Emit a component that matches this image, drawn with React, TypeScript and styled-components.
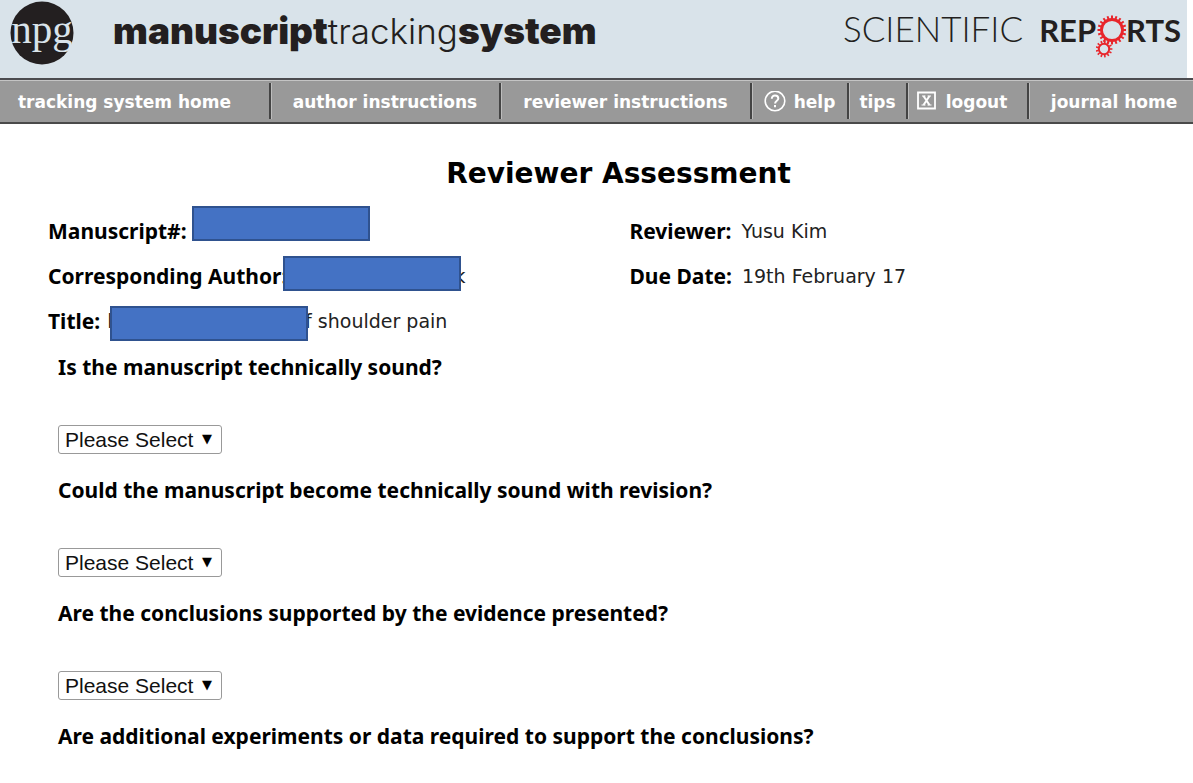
import React from "react";
import styled, { createGlobalStyle } from "styled-components";

const GlobalStyle = createGlobalStyle`
  * { box-sizing: border-box; }
  body {
    margin: 0;
    background: #fff;
    color: #000;
    font-family: "DejaVu Sans", Verdana, sans-serif;
    overflow-x: hidden;
  }
`;

const Header = styled.header`
  display: flex;
  align-items: flex-start;
  justify-content: space-between;
  height: 78px;
  margin-right: 6px;
  background: #d9e3ea;
`;

const Brand = styled.div`
  display: flex;
  align-items: flex-start;
  gap: 38px;
  padding-left: 10px;
`;

const NpgLogo = styled.svg`
  display: block;
  width: 65px;
  height: 65px;
`;

const SystemName = styled.div`
  padding-top: 8px;
  font: 300 35px/46px Inter, "Liberation Sans", sans-serif;
  color: #231f20;
  white-space: nowrap;

  strong {
    font-size: 37px;
    font-weight: 900;
  }
`;

const JournalLogo = styled.div`
  display: flex;
  align-items: baseline;
  padding: 8px 6px 0 0;
  font: 300 35px/40px Lato, sans-serif;
  color: #231f20;
  white-space: nowrap;
`;

const JournalStrong = styled.strong`
  display: flex;
  margin-left: 16px;
  font-size: 31px;
  font-weight: 700;
`;

const Gears = styled.svg`
  display: block;
  width: 30px;
  height: 44px;
  margin-top: 4px;
`;

const Nav = styled.nav`
  display: grid;
  grid-template-columns: 271fr 230fr 251fr 97fr 59fr 121fr 164fr;
  height: 46px;
  padding: 3px 0;
  background: #999;
  border-top: 2px solid #4c4c50;
  border-bottom: 2px solid #4a4a4a;
  box-shadow: inset 0 1px 0 #c4c4c4;
`;

const NavLink = styled.a<{ $before?: number; $after?: number; $last?: boolean }>`
  display: flex;
  align-items: center;
  justify-content: center;
  gap: 8px;
  padding: 2px ${(p) => p.$after ?? 0}px 0 ${(p) => p.$before ?? 0}px;
  border-right: ${(p) => (p.$last ? "none" : "2px solid #444")};
  box-shadow: ${(p) => (p.$last ? "none" : "1px 0 0 #bdbdbd")};
  color: #fff;
  font-size: 17px;
  font-weight: 700;
  text-decoration: none;
  white-space: nowrap;
`;

const NavIcon = styled.svg`
  display: block;
  width: 22px;
  height: 22px;
`;

const Main = styled.main`
  padding: 33px 48px 16px;
`;

const Title = styled.h1`
  margin: 0 0 28px;
  padding-left: 44px;
  font-size: 28px;
  line-height: 34px;
  text-align: center;
`;

const Details = styled.dl`
  display: grid;
  grid-template-columns: 53% 47%;
  row-gap: 21px;
  margin: 0 0 22px;
  font-size: 19px;
  line-height: 24px;
`;

const Detail = styled.div<{ $wide?: boolean; $gap?: number }>`
  position: relative;
  display: flex;
  gap: ${(p) => p.$gap ?? 7}px;
  grid-column: ${(p) => (p.$wide ? "1 / -1" : "auto")};
  white-space: nowrap;

  dt {
    font-family: "Noto Sans", sans-serif;
    font-size: 21px;
    font-weight: 700;
  }
  dd {
    margin: 0;
    color: #222;
  }
`;

const Trailing = styled.span<{ $indent: number }>`
  margin-left: ${(p) => p.$indent}px;
`;

const Cover = styled.span<{ $left: number; $top: number; $width: number }>`
  position: absolute;
  left: ${(p) => p.$left}px;
  top: ${(p) => p.$top}px;
  width: ${(p) => p.$width}px;
  height: 35px;
  background: #4472c4;
  border: 2px solid #2f528f;
`;

const Questions = styled.form`
  display: grid;
  gap: 24px;
  padding-left: 10px;
`;

const QuestionLabel = styled.label`
  display: block;
  font: 700 21px/24px "Noto Sans", sans-serif;
`;

const SelectBox = styled.div`
  position: relative;
  width: 164px;
  height: 29px;
  margin-top: 46px;
`;

const Select = styled.select`
  appearance: none;
  display: block;
  width: 100%;
  height: 100%;
  padding: 0 6px;
  background: #fff;
  border: 1px solid #999;
  border-radius: 3px;
  color: #111;
  font: 21px "Liberation Sans", Arial, sans-serif;
`;

const Arrow = styled.span`
  position: absolute;
  right: 10px;
  top: 6px;
  font-size: 13px;
  line-height: 16px;
  pointer-events: none;
`;

const questions = [
  { text: "Is the manuscript technically sound?", answerable: true },
  { text: "Could the manuscript become technically sound with revision?", answerable: true },
  { text: "Are the conclusions supported by the evidence presented?", answerable: true },
  { text: "Are additional experiments or data required to support the conclusions?", answerable: false },
];

function teeth(cx: number, cy: number, inner: number, outer: number, count: number) {
  return Array.from({ length: count }, (_, i) => {
    const a = (i * 2 * Math.PI) / count;
    const c = Math.cos(a);
    const s = Math.sin(a);
    return `M${cx + inner * c} ${cy + inner * s}L${cx + outer * c} ${cy + outer * s}`;
  }).join("");
}

export default function App() {
  return (
    <>
      <GlobalStyle />
      <Header>
        <Brand>
          <NpgLogo viewBox="0 0 65 65" role="img" aria-label="npg">
            <circle cx="32" cy="33" r="31.5" fill="#231f20" />
            <text x="32" y="43" textAnchor="middle" fontFamily="Liberation Serif" fontSize="41" fill="#d9e3ea">
              npg
            </text>
          </NpgLogo>
          <SystemName>
            <strong>manuscript</strong>tracking<strong>system</strong>
          </SystemName>
        </Brand>
        <JournalLogo>
          <span>SCIENTIFIC</span>
          <JournalStrong>
            <span>REP</span>
            <Gears viewBox="1 0 30 44" fill="none" stroke="#e8252b" aria-label="O">
              <circle cx="17" cy="16" r="10.500" strokeWidth="2.8" />
              <path d={teeth(17, 16, 11, 14.5, 20)} strokeWidth="2" />
              <circle cx="9" cy="35" r="5.2" strokeWidth="2" />
              <path d={teeth(9, 35, 6, 8.4, 13)} strokeWidth="1.6" />
            </Gears>
            <span>RTS</span>
          </JournalStrong>
        </JournalLogo>
      </Header>
      <Nav>
        <NavLink href="#" $after={20}>tracking system home</NavLink>
        <NavLink href="#">author instructions</NavLink>
        <NavLink href="#">reviewer instructions</NavLink>
        <NavLink href="#">
          <NavIcon viewBox="0 0 22 22" fill="none" stroke="#fff">
            <circle cx="11" cy="10" r="9.800" strokeWidth="1.6" />
            <path d="M7.800 7.800c0-4.500 6.500-4 6.500-.3 0 2.300-3.200 2.300-3.200 5M11 14v2.200" strokeWidth="2" />
          </NavIcon>
          help
        </NavLink>
        <NavLink href="#">tips</NavLink>
        <NavLink href="#" $after={12}>
          <NavIcon viewBox="0 0 22 22" fill="none" stroke="#fff">
            <path d="M2 1.500h17v16H2z" strokeWidth="1.8" />
            <path d="M7.500 5l6 9M13.500 5l-6 9" strokeWidth="2" />
            <path d="M6 5h3.500M11.500 5h3.500M5.500 14h4M11.500 14h4" strokeWidth="1" />
          </NavIcon>
          logout
        </NavLink>
        <NavLink href="#" $before={6} $last>journal home</NavLink>
      </Nav>
      <Main>
        <Title>Reviewer Assessment</Title>
        <Details>
          <Detail>
            <dt>Manuscript#:</dt>
            <dd><Cover $left={144} $top={-13} $width={178} /></dd>
          </Detail>
          <Detail $gap={10}>
            <dt>Reviewer:</dt>
            <dd>Yusu Kim</dd>
          </Detail>
          <Detail>
            <dt>Corresponding Author:</dt>
            <dd>
              <Trailing $indent={160}>k</Trailing>
              <Cover $left={235} $top={-8} $width={178} />
            </dd>
          </Detail>
          <Detail $gap={10}>
            <dt>Due Date:</dt>
            <dd>19th February 17</dd>
          </Detail>
          <Detail $wide>
            <dt>Title:</dt>
            <dd>
              l
              <Trailing $indent={181}>of shoulder pain</Trailing>
              <Cover $left={62} $top={-3} $width={198} />
            </dd>
          </Detail>
        </Details>
        <Questions>
          {questions.map((q, i) => (
            <div key={q.text}>
              <QuestionLabel as={q.answerable ? "label" : "div"} htmlFor={q.answerable ? `question-${i}` : undefined}>
                {q.text}
              </QuestionLabel>
              {q.answerable && (
                <SelectBox>
                  <Select id={`question-${i}`}>
                    <option>Please Select</option>
                  </Select>
                  <Arrow aria-hidden="true">▼</Arrow>
                </SelectBox>
              )}
            </div>
          ))}
        </Questions>
      </Main>
    </>
  );
}
